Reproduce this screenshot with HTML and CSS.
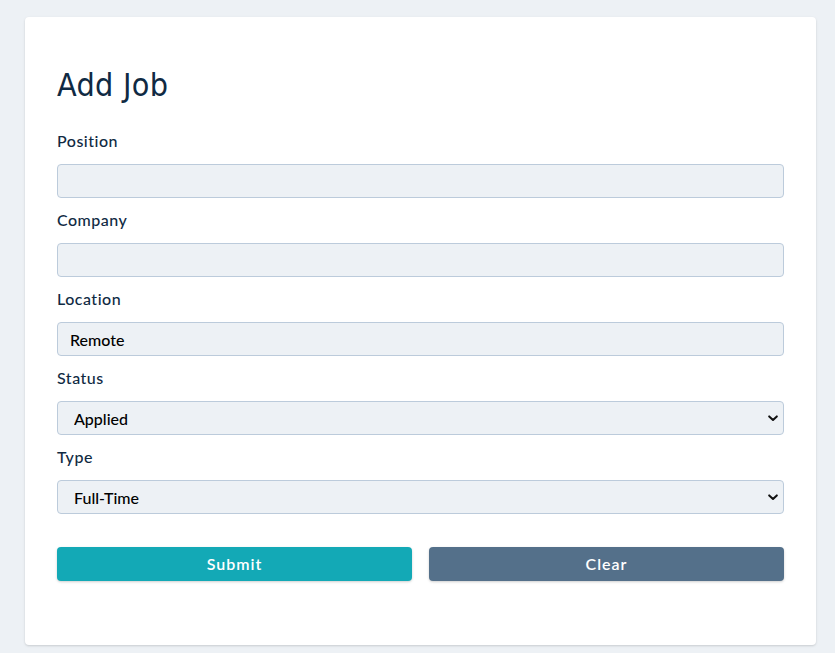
FILE: index.html
```html
<!DOCTYPE html>
<html lang="en">
<head>
<meta charset="utf-8">
<title>Add Job</title>
<link rel="stylesheet" href="styles.css">
</head>
<body>
<section class="card">
  <form class="form">
    <h3 class="title">Add Job</h3>
    <div class="row">
      <label class="label" for="position">Position</label>
      <input class="input" id="position" type="text" value="">
    </div>
    <div class="row">
      <label class="label" for="company">Company</label>
      <input class="input" id="company" type="text" value="">
    </div>
    <div class="row">
      <label class="label" for="location">Location</label>
      <input class="input" id="location" type="text" value="Remote">
    </div>
    <div class="row">
      <label class="label" for="status">Status</label>
      <div class="select-wrap">
        <select class="input select" id="status">
          <option>Applied</option>
          <option>Interview</option>
          <option>Declined</option>
        </select>
        <svg class="chevron" width="10" height="7" viewBox="0 0 10 7"><path d="M1.2 1.4 L5 5 L8.8 1.4" fill="none" stroke="#111" stroke-width="2" stroke-linecap="round" stroke-linejoin="round"/></svg>
      </div>
    </div>
    <div class="row">
      <label class="label" for="type">Type</label>
      <div class="select-wrap">
        <select class="input select" id="type">
          <option>Full-Time</option>
          <option>Part-Time</option>
          <option>Remote</option>
          <option>Internship</option>
        </select>
        <svg class="chevron" width="10" height="7" viewBox="0 0 10 7"><path d="M1.2 1.4 L5 5 L8.8 1.4" fill="none" stroke="#111" stroke-width="2" stroke-linecap="round" stroke-linejoin="round"/></svg>
      </div>
    </div>
    <div class="buttons">
      <button class="btn btn-submit" type="button">Submit</button>
      <button class="btn btn-clear" type="button">Clear</button>
    </div>
  </form>
</section>
</body>
</html>
```
FILE: styles.css
```css
* { box-sizing: border-box; }
html, body { margin: 0; padding: 0; }
body {
  background: #edf1f5;
  font-family: Lato, "Open Sans", sans-serif;
  padding: 17px 19px 0 25px;
  height: 653px;
  overflow: hidden;
}
.card {
  background: #fff;
  border-radius: 4px;
  box-shadow: 0 1px 3px rgba(0,0,0,0.1), 0 1px 2px rgba(0,0,0,0.06);
  padding: 48px 32px 64px 32px;
}
.form { margin: 0; }
.title {
  margin: 0 0 24px 0;
  font-family: "DejaVu Sans Condensed", "DejaVu Sans", sans-serif;
  font-stretch: condensed;
  font-weight: 400;
  font-size: 32px;
  line-height: 40px;
  letter-spacing: 0.3px;
  color: #102a43;
}
.row { margin-bottom: 10px; }
.label {
  display: block;
  font-size: 16px;
  font-weight: 500;
  line-height: 24px;
  letter-spacing: 0.5px;
  color: #102a43;
  margin-bottom: 11px;
}
.input {
  display: block;
  width: 100%;
  height: 34px;
  border: 1px solid #bccbdb;
  border-radius: 4px;
  background: #edf1f5;
  padding: 0 12px;
  font-family: Lato, sans-serif;
  font-weight: 500;
  font-size: 16px;
  color: #000;
  outline: none;
}
.select-wrap { position: relative; }
.select {
  appearance: none;
  -webkit-appearance: none;
  padding: 0 16px;
}
.chevron {
  position: absolute;
  right: 6px;
  top: 14px;
  pointer-events: none;
}
.buttons {
  display: grid;
  grid-template-columns: 1fr 1fr;
  column-gap: 17px;
  margin-top: 33px;
}
.btn {
  height: 34px;
  border: none;
  border-radius: 4px;
  color: #fff;
  font-family: Lato, sans-serif;
  font-weight: 600;
  font-size: 16px;
  letter-spacing: 1px;
  padding: 0 0 2px 0;
  box-shadow: 0 1px 3px rgba(0,0,0,0.12), 0 1px 2px rgba(0,0,0,0.08);
  cursor: pointer;
}
.btn-submit { background: #13a9b6; }
.btn-clear { background: #54708a; }
```
